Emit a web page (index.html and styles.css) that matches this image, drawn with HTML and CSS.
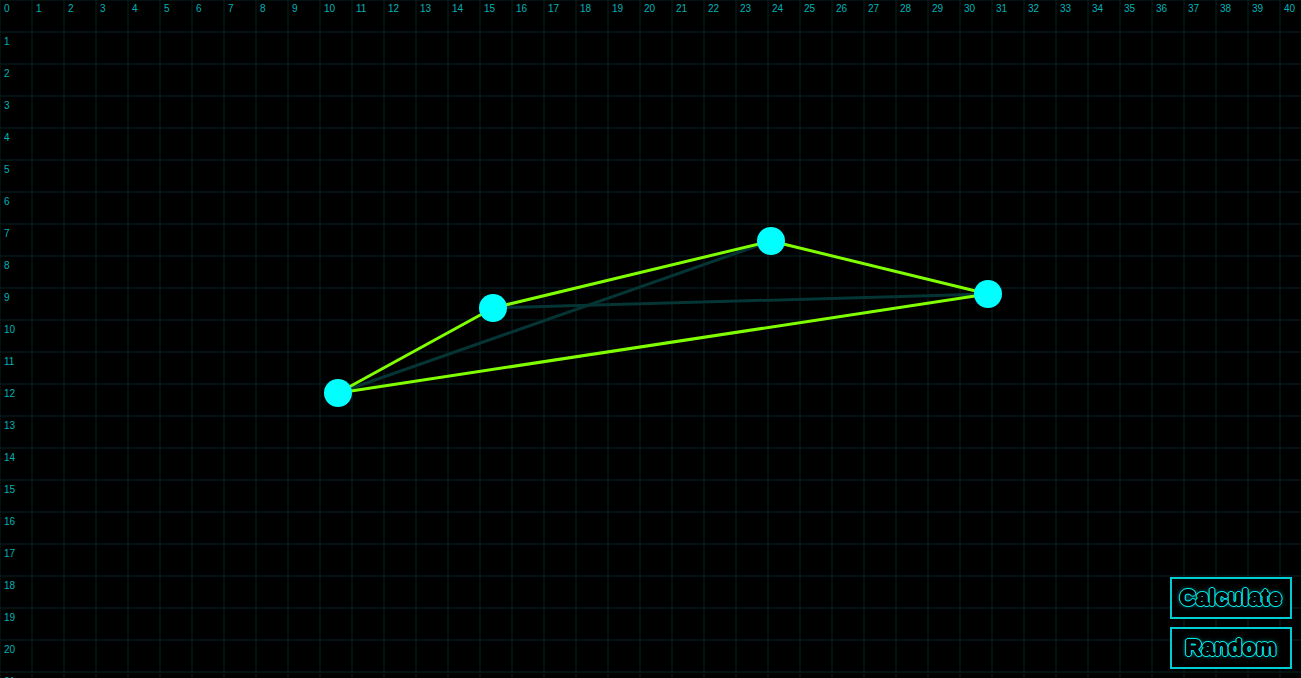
FILE: index.html
```html
<!DOCTYPE html>
<html>
<head>
  <link rel="stylesheet" href="styles.css">
</head>
<body>
  <div class="board">
    <svg id="plane" class="plane" width="1301" height="678" viewBox="0 0 1301 678">
      <g id="grid" class="grid"></g>
      <g id="labels" class="labels"></g>
      <g class="edges-inner">
        <line x1="338" y1="393" x2="771" y2="241"></line>
        <line x1="493" y1="308" x2="988" y2="294"></line>
      </g>
      <g class="edges-hull">
        <polygon points="338,393 493,308 771,241 988,294"></polygon>
      </g>
      <g class="points">
        <circle cx="338" cy="393" r="14"></circle>
        <circle cx="493" cy="308" r="14"></circle>
        <circle cx="771" cy="241" r="14"></circle>
        <circle cx="988" cy="294" r="14"></circle>
      </g>
    </svg>

    <div class="controls">
      <button id="calculate">Calculate</button>
      <button id="random">Random</button>
    </div>
  </div>

  <script>
    // Build the grid and the axis numbers (32px cells)
    const SVG_NS = 'http://www.w3.org/2000/svg';
    const CELL = 32;
    const W = 1301, H = 678;
    const grid = document.getElementById('grid');
    const labels = document.getElementById('labels');

    function el(name, attrs, text) {
      const node = document.createElementNS(SVG_NS, name);
      Object.keys(attrs).forEach(k => node.setAttribute(k, attrs[k]));
      if (text !== undefined) node.textContent = text;
      return node;
    }

    for (let i = 0; i * CELL <= W; i++) {
      grid.appendChild(el('line', { x1: i * CELL, y1: 0, x2: i * CELL, y2: H }));
      labels.appendChild(el('text', { x: i * CELL + 4, y: 12 }, i));
    }
    for (let j = 0; j * CELL <= H + CELL; j++) {
      grid.appendChild(el('line', { x1: 0, y1: j * CELL, x2: W, y2: j * CELL }));
      if (j > 0) labels.appendChild(el('text', { x: 4, y: j * CELL + 13 }, j));
    }
  </script>
</body>
</html>
```

FILE: styles.css
```css
html, body {
  margin: 0;
  padding: 0;
  background: #000;
  overflow: hidden;
}
.board {
  position: relative;
  width: 1301px;
  height: 678px;
}
.plane {
  display: block;
}
.grid line {
  stroke: #052222;
  stroke-width: 1;
}
.labels text {
  font-family: "Liberation Sans", Arial, sans-serif;
  font-size: 10px;
  fill: #00b4b8;
}
.edges-inner line {
  stroke: #053434;
  stroke-width: 3;
}
.edges-hull polygon {
  fill: none;
  stroke: #80ff00;
  stroke-width: 3;
  stroke-linejoin: round;
}
.points circle {
  fill: #00ffff;
}
.controls {
  position: absolute;
  right: 9px;
  bottom: 9px;
  display: flex;
  flex-direction: column;
  gap: 8px;
}
.controls button {
  width: 122px;
  height: 42px;
  padding: 0;
  background: #000;
  border: 2px solid #00ccd4;
  color: #000;
  font-family: "Liberation Sans", Arial, sans-serif;
  font-weight: bold;
  font-size: 22px;
  letter-spacing: 0.5px;
  cursor: pointer;
  text-shadow:
    0.7px 0 0 #000, -0.7px 0 0 #000, 0 0.7px 0 #000, 0 -0.7px 0 #000,
    1.7px 0 0 #00e8e8, -1.7px 0 0 #00e8e8, 0 1.7px 0 #00e8e8, 0 -1.7px 0 #00e8e8,
    1.2px 1.2px 0 #00e8e8, -1.2px 1.2px 0 #00e8e8, 1.2px -1.2px 0 #00e8e8, -1.2px -1.2px 0 #00e8e8,
    0 0 4px #00cccc, 0 0 6px #007777;
}
```
